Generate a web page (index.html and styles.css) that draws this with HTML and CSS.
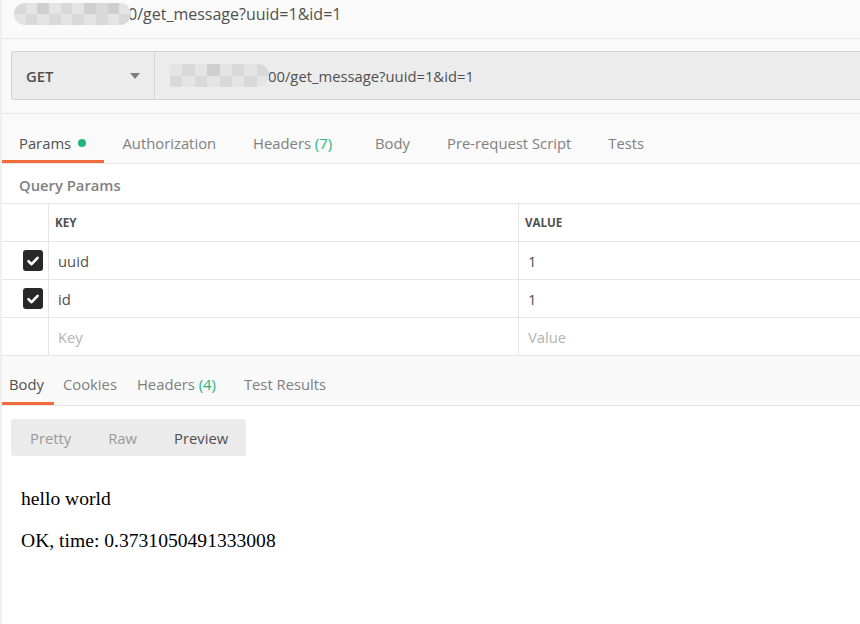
FILE: index.html
```html
<!DOCTYPE html>
<html>
<head>
<meta charset="utf-8">
<link rel="stylesheet" href="styles.css">
</head>
<body>
<div class="app">
  <div class="title">
    <div class="blur blur-title">
      <i class="c2"></i><i class="c1"></i><i class="c3"></i><i class="c1"></i><i class="c2"></i><i class="c1"></i><i class="c3"></i><i class="c2"></i><i class="c3"></i><i class="c1"></i>
      <i class="c1"></i><i class="c2"></i><i class="c1"></i><i class="c2"></i><i class="c1"></i><i class="c2"></i><i class="c1"></i><i class="c2"></i><i class="c1"></i><i class="c2"></i>
    </div>
    <span class="title-text">0/get_message?uuid=1&amp;id=1</span>
  </div>

  <div class="urlbar">
    <div class="url-box">
      <div class="method">
        <span class="method-name">GET</span>
        <span class="caret"></span>
      </div>
      <div class="url">
        <div class="blur blur-url">
          <i class="c1"></i><i class="c2"></i><i class="c1"></i><i class="c3"></i><i class="c1"></i><i class="c2"></i><i class="c1"></i><i class="c2"></i>
          <i class="c2"></i><i class="c1"></i><i class="c2"></i><i class="c1"></i><i class="c2"></i><i class="c1"></i><i class="c2"></i><i class="c1"></i>
        </div>
        <span class="url-text">00/get_message?uuid=1&amp;id=1</span>
      </div>
    </div>
  </div>

  <div class="tabs req-tabs">
    <div class="tab active first">Params <span class="dot"></span></div>
    <div class="tab">Authorization</div>
    <div class="tab wide">Headers <span class="count">(7)</span></div>
    <div class="tab">Body</div>
    <div class="tab">Pre-request Script</div>
    <div class="tab">Tests</div>
  </div>

  <div class="query-title">Query Params</div>

  <div class="table">
    <div class="row head">
      <div class="cell chk"></div>
      <div class="cell key">KEY</div>
      <div class="cell val">VALUE</div>
    </div>
    <div class="row">
      <div class="cell chk"><span class="checkbox"><svg width="14" height="14" viewBox="0 0 14 14"><path d="M2.5 7.2 L5.6 10.2 L11.6 3.8" fill="none" stroke="#fff" stroke-width="2.6" stroke-linecap="round" stroke-linejoin="round"/></svg></span></div>
      <div class="cell key">uuid</div>
      <div class="cell val">1</div>
    </div>
    <div class="row">
      <div class="cell chk"><span class="checkbox"><svg width="14" height="14" viewBox="0 0 14 14"><path d="M2.5 7.2 L5.6 10.2 L11.6 3.8" fill="none" stroke="#fff" stroke-width="2.6" stroke-linecap="round" stroke-linejoin="round"/></svg></span></div>
      <div class="cell key">id</div>
      <div class="cell val">1</div>
    </div>
    <div class="row">
      <div class="cell chk"></div>
      <div class="cell key ph">Key</div>
      <div class="cell val ph">Value</div>
    </div>
  </div>

  <div class="tabs res-tabs">
    <div class="tab active">Body</div>
    <div class="tab">Cookies</div>
    <div class="tab">Headers <span class="count">(4)</span></div>
    <div class="tab">Test Results</div>
  </div>

  <div class="response">
    <div class="seg">
      <div class="seg-btn">Pretty</div>
      <div class="seg-btn">Raw</div>
      <div class="seg-btn on">Preview</div>
    </div>
    <div class="preview">
      <p>hello world</p>
      <p>OK, time: 0.3731050491333008</p>
    </div>
  </div>
</div>
</body>
</html>
```

FILE: styles.css
```css
* { box-sizing: border-box; }
html, body { margin: 0; padding: 0; }
body {
  width: 860px;
  height: 624px;
  overflow: hidden;
  background: #fafafa;
  font-family: "Open Sans", "Noto Sans", sans-serif;
  color: #505050;
}
.app {
  height: 624px;
  border-left: 2px solid #efefef;
  display: flex;
  flex-direction: column;
}

/* title */
.title {
  height: 39px;
  border-bottom: 1px solid #e6e6e6;
  display: flex;
  align-items: flex-start;
  padding-left: 12px;
  padding-top: 3px;
}
.title-text {
  font-size: 16px;
  line-height: 22px;
  color: #505050;
  margin-left: -3px;
}
.blur {
  display: grid;
  overflow: hidden;
  filter: blur(0.6px);
}
.blur i { display: block; }
.blur .c1 { background: #e4e4e4; }
.blur .c2 { background: #d9d9d9; }
.blur .c3 { background: #cfcfcf; }
.blur-title {
  width: 117px;
  height: 22px;
  border-radius: 11px;
  grid-template-columns: repeat(10, 1fr);
  grid-template-rows: 1fr 1fr;
}
.blur-url {
  width: 99px;
  height: 23px;
  border-radius: 3px 11px 11px 3px;
  grid-template-columns: repeat(8, 1fr);
  grid-template-rows: 1fr 1fr;
}

/* url bar */
.urlbar {
  padding: 12px 0 13px 9px;
  border-bottom: 1px solid #e6e6e6;
}
.url-box {
  height: 49px;
  display: flex;
  background: #ececec;
  border: 1px solid #d3d3d3;
  border-right: none;
  border-radius: 3px 0 0 3px;
}
.method {
  width: 143px;
  border-right: 1px solid #d6d6d6;
  display: flex;
  align-items: center;
  justify-content: space-between;
  padding: 0 14px 0 14px;
}
.method-name {
  font-size: 14.8px;
  font-weight: 600;
  color: #505050;
}
.caret {
  width: 0;
  height: 0;
  border-left: 5px solid transparent;
  border-right: 5px solid transparent;
  border-top: 6px solid #7d7d7d;
}
.url {
  display: flex;
  align-items: center;
  padding-left: 15px;
}
.url-text {
  font-size: 14.8px;
  color: #505050;
  margin-left: -1px;
}

/* tabs */
.tabs {
  display: flex;
  border-bottom: 1px solid #e6e6e6;
}
.tab {
  display: flex;
  align-items: center;
  font-size: 14.8px;
  color: #808080;
  white-space: pre;
}
.req-tabs { height: 50px; }
.req-tabs .tab { padding: 8px 18.5px 0 18.5px; }
.req-tabs .tab.first { padding-left: 17px; padding-right: 18px; }
.req-tabs .tab.wide { padding-right: 24.5px; }
.tab.active {
  color: #505050;
  box-shadow: inset 0 -3px 0 #f26b3a;
}
.dot {
  display: inline-block;
  width: 8px;
  height: 8px;
  border-radius: 50%;
  background: #26b47f;
  margin-left: 3px;
}
.count { color: #26b47f; }

.query-title {
  background: #fff;
  height: 40px;
  border-bottom: 1px solid #e6e6e6;
  font-size: 14.8px;
  font-weight: 600;
  color: #808080;
  display: flex;
  align-items: center;
  padding: 2px 0 0 17px;
}

/* table */
.table { background: #fff; }
.row {
  display: flex;
  height: 38px;
  border-bottom: 1px solid #e6e6e6;
}
.cell {
  display: flex;
  align-items: center;
  font-size: 14.8px;
  color: #505050;
}
.cell.chk {
  width: 47px;
  border-right: 1px solid #e6e6e6;
  justify-content: flex-end;
  padding-right: 5px;
}
.cell.key {
  width: 470px;
  border-right: 1px solid #e6e6e6;
  padding-left: 9px;
}
.cell.val {
  flex: 1;
  padding-left: 9px;
}
.row.head .cell.key,
.row.head .cell.val {
  font-size: 11.6px;
  font-weight: 700;
  color: #505050;
  padding-left: 6px;
}
.cell.ph { color: #b3b3b3; }
.checkbox {
  width: 20px;
  height: 21px;
  border-radius: 3px;
  background: #282828;
  display: flex;
  align-items: center;
  justify-content: center;
}

/* response tabs */
.res-tabs {
  height: 50px;
  background: #f9f9f9;
}
.res-tabs .tab { padding: 7px 10px 0 10px; }
.res-tabs .tab:first-child { padding: 7px 10px 0 7px; }
.res-tabs .tab:nth-child(2) { padding-left: 9px; }
.res-tabs .tab:nth-child(4) { padding-left: 18px; }

.response {
  flex: 1;
  background: #fff;
  padding: 13px 0 0 9px;
}
.seg {
  display: inline-flex;
  height: 37px;
  background: #ebebeb;
  border-radius: 3px;
}
.seg-btn {
  display: flex;
  align-items: center;
  padding: 0 18px 0 19px;
  font-size: 14.8px;
  color: #9a9a9a;
}
.seg-btn.on { color: #505050; padding-right: 18px; }
.preview {
  padding: 31px 0 0 10px;
  font-family: "Liberation Serif", "Times New Roman", serif;
  font-size: 19.6px;
  color: #000;
}
.preview p {
  margin: 0 0 19px 0;
  line-height: 23px;
}
```
